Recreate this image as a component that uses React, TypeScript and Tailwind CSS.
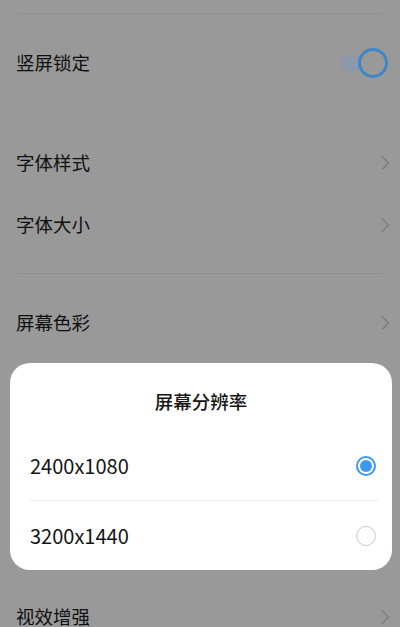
import React from 'react';

const font = { fontFamily: '"Noto Sans CJK SC", "Noto Sans", sans-serif' };

const Chevron = () => (
  <svg width="10" height="16" viewBox="0 0 10 16" className="shrink-0">
    <polyline points="2,1.5 8.5,8 2,14.5" fill="none" stroke="#7c7c7c" strokeWidth="1.4" />
  </svg>
);

const Row = ({ label, chevron = true }: { label: string; chevron?: boolean }) => (
  <div className="h-[62px] flex items-center justify-between pl-4 pr-[10px]">
    <span className="text-[18.5px] text-[#0f0f0f]">{label}</span>
    {chevron && <Chevron />}
  </div>
);

const Radio = ({ checked }: { checked: boolean }) =>
  checked ? (
    <div className="w-5 h-5 rounded-full border-2 border-[#3d97f4] flex items-center justify-center">
      <div className="w-[12px] h-[12px] rounded-full bg-[#3d97f4]" />
    </div>
  ) : (
    <div className="w-5 h-5 rounded-full border-[1.5px] border-[#c9c9c9]" />
  );

export default function App() {
  return (
    <div className="relative w-[400px] h-[627px] overflow-hidden bg-[#999999]" style={font}>
      <div className="h-[13px]" />
      <div className="mx-[17px] h-px bg-[#8f8f8f]" />
      <div className="h-[18px]" />

      {/* 竖屏锁定 */}
      <div className="h-[62px] flex items-center justify-between pl-4 pr-[12px]">
        <span className="text-[18.5px] text-[#0f0f0f]">竖屏锁定</span>
        <div className="relative w-[48px] h-[30px] flex items-center">
          <div className="w-[34px] h-[15px] rounded-full bg-[#8b98aa]" />
          <div className="absolute right-0 top-0 w-[30px] h-[30px] rounded-full border-[3px] border-[#3f86c8] bg-[#999999]" />
        </div>
      </div>

      <div className="h-[38px]" />
      <Row label="字体样式" />
      <Row label="字体大小" />
      <div className="h-[17px]" />
      <div className="mx-[17px] h-px bg-[#8f8f8f]" />
      <div className="h-[18px]" />
      <Row label="屏幕色彩" />
      <Row label="屏幕分辨率" />
      <div className="h-[170px]" />
      <Row label="视效增强" />

      {/* dialog */}
      <div className="absolute left-[10px] top-[363px] w-[382px] h-[207px] rounded-[20px] bg-white">
        <div className="h-[78px] flex items-center justify-center">
          <span className="text-[18.5px] font-medium text-[#141414]">屏幕分辨率</span>
        </div>
        <div className="h-[50px] flex items-center justify-between pl-[20px] pr-[16px]">
          <span className="text-[20px] text-[#141414]">2400x1080</span>
          <Radio checked />
        </div>
        <div className="ml-[20px] mr-[14px] h-px bg-[#f0f0f0] mt-[9px]" />
        <div className="h-[70px] flex items-center justify-between pl-[20px] pr-[16px]">
          <span className="text-[20px] text-[#141414]">3200x1440</span>
          <Radio checked={false} />
        </div>
      </div>
    </div>
  );
}
